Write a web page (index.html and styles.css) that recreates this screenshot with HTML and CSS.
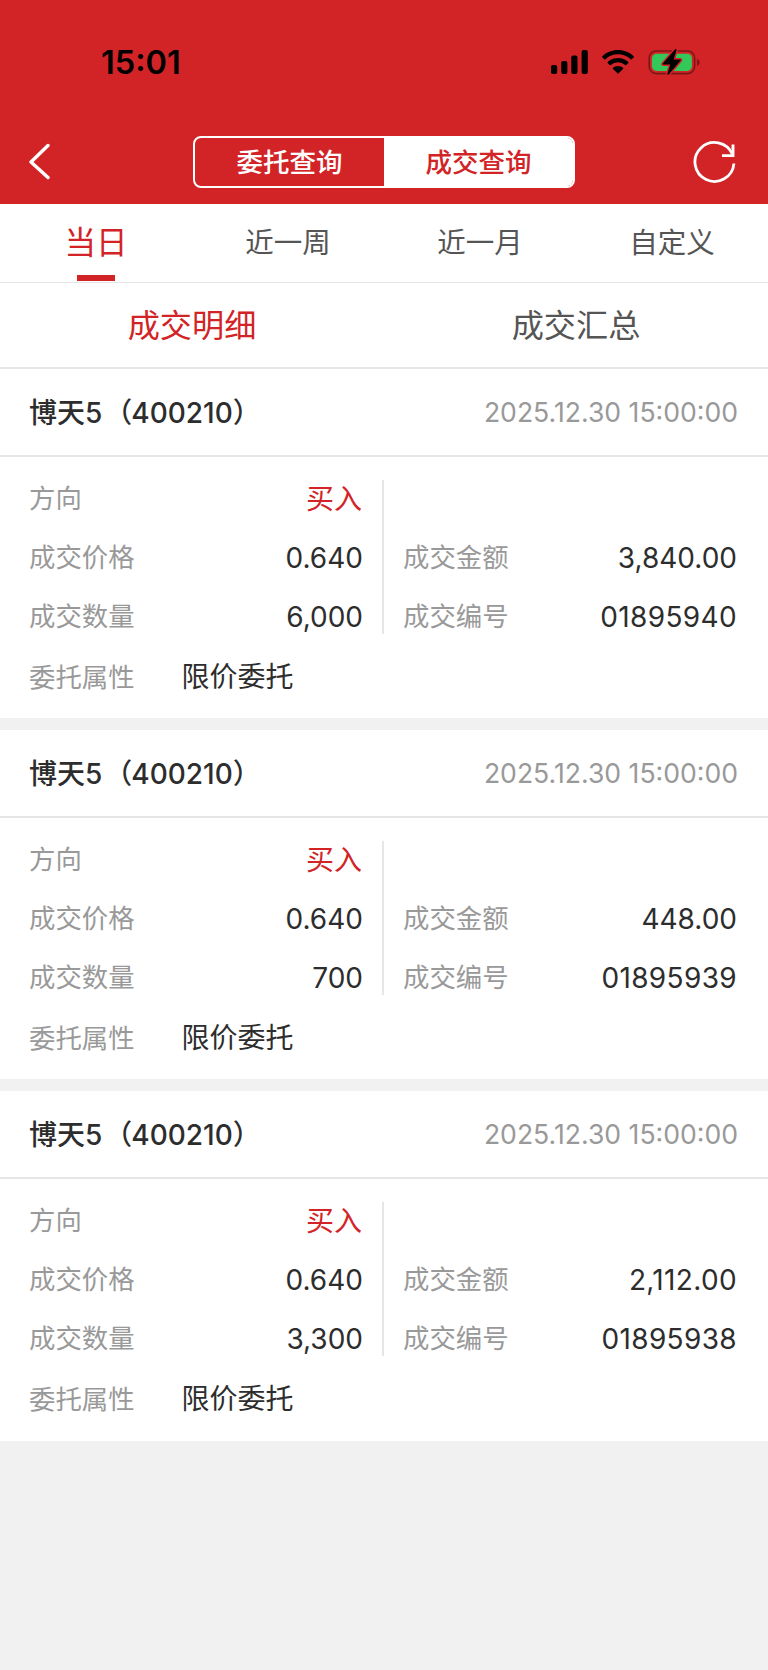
FILE: index.html
```html
<!DOCTYPE html>
<html lang="zh-CN">
<head>
  <meta charset="UTF-8">
  <meta name="viewport" content="width=device-width, initial-scale=1.0">
  <title>成交查询</title>
  <link rel="stylesheet" href="styles.css">
</head>
<body>

<header>
  <div class="status-bar">
    <span class="time">15:01</span>
    <div class="status-icons">
      <svg class="signal" width="37" height="24" viewBox="0 0 37 24">
        <rect x="0" y="15" width="6.2" height="9" rx="2"/>
        <rect x="10.2" y="11" width="6.2" height="13" rx="2"/>
        <rect x="20.3" y="5.6" width="6.2" height="18.4" rx="2"/>
        <rect x="30.6" y="0" width="6.2" height="24" rx="2"/>
      </svg>
      <svg class="wifi" width="32" height="24" viewBox="0 0 32 24">
        <path d="M16 0C22.100 0 27.600 2.300 31.600 6.200a.8.8 0 0 1 0 1.200L29.700 9.300a.8.8 0 0 1-1.100 0A18 18 0 0 0 3.400 9.300a.8.8 0 0 1-1.100 0L.4 7.400a.8.8 0 0 1 0-1.200C4.400 2.300 9.900 0 16 0Z"/>
        <path d="M16 7.900C20 7.900 23.600 9.400 26.300 11.900a.8.8 0 0 1 0 1.200L24.300 15a.8.8 0 0 1-1.100 0A10.600 10.600 0 0 0 8.800 15a.8.8 0 0 1-1.100 0L5.700 13.100a.8.8 0 0 1 0-1.200C8.400 9.400 12 7.900 16 7.900Z"/>
        <path d="M16 15.900C18 15.900 19.700 16.600 21 17.700a.8.8 0 0 1 0 1.200L16.600 23.300a.8.8 0 0 1-1.200 0L11 18.900a.8.8 0 0 1 0-1.200C12.300 16.600 14 15.900 16 15.900Z"/>
      </svg>
      <svg class="battery" width="53" height="28" viewBox="0 0 53 28">
        <rect x="1.200" y="3" width="45.400" height="22.600" rx="7" fill="none" stroke="#7d1517" stroke-width="1.600"/>
        <path d="M49 10.700c1.700.7 2.500 2 2.500 3.600s-.8 2.900-2.500 3.600z" fill="#7d1517"/>
        <rect x="3.900" y="5.700" width="40" height="17.200" rx="4.600" fill="#34c759"/>
        <path class="bolt" d="M27.200 1.300 14.800 15.600c-.4.500-.1 1 .5 1h7L19.400 25.800c-.3 1.200.6 1.500 1.300.7L32.600 12.500c.4-.5.200-1.100-.5-1.100H25.600L28.500 2.300c.3-1.100-.6-1.700-1.300-1z"/>
      </svg>
    </div>
  </div>
  <div class="nav-bar">
    <svg class="back" width="22" height="38" viewBox="0 0 22 38">
      <path d="M20 2.500 3 19 20 34.500" fill="none" stroke="#fff" stroke-width="3.400" stroke-linecap="round" stroke-linejoin="round"/>
    </svg>
    <div class="switch">
      <a class="switch-item">委托查询</a>
      <a class="switch-item active">成交查询</a>
    </div>
    <svg class="refresh" width="44" height="44" viewBox="0 0 44 44">
      <path d="M40.900 23.500A19.500 19.500 0 1 1 39.400 14.300" fill="none" stroke="#fff" stroke-width="2.800"/>
      <path d="M40 4.500V15.600H29" fill="none" stroke="#fff" stroke-width="2.900"/>
    </svg>
  </div>
</header>

<nav class="range-tabs">
  <a class="active">当日</a>
  <a>近一周</a>
  <a>近一月</a>
  <a>自定义</a>
</nav>

<nav class="view-tabs">
  <a class="active">成交明细</a>
  <a>成交汇总</a>
</nav>

<main>
  <section class="card">
    <div class="card-head">
      <h2>博天5<span class="paren">（</span>400210）</h2>
      <time>2025.12.30 15:00:00</time>
    </div>
    <div class="card-body">
      <div class="columns">
        <dl class="left">
          <div><dt>方向</dt><dd class="buy">买入</dd></div>
          <div><dt>成交价格</dt><dd>0.640</dd></div>
          <div><dt>成交数量</dt><dd>6,000</dd></div>
        </dl>
        <dl class="right">
          <div></div>
          <div><dt>成交金额</dt><dd>3,840.00</dd></div>
          <div><dt>成交编号</dt><dd class="code">01895940</dd></div>
        </dl>
      </div>
      <div class="attr"><span>委托属性</span><b>限价委托</b></div>
    </div>
  </section>

  <section class="card">
    <div class="card-head">
      <h2>博天5<span class="paren">（</span>400210）</h2>
      <time>2025.12.30 15:00:00</time>
    </div>
    <div class="card-body">
      <div class="columns">
        <dl class="left">
          <div><dt>方向</dt><dd class="buy">买入</dd></div>
          <div><dt>成交价格</dt><dd>0.640</dd></div>
          <div><dt>成交数量</dt><dd>700</dd></div>
        </dl>
        <dl class="right">
          <div></div>
          <div><dt>成交金额</dt><dd>448.00</dd></div>
          <div><dt>成交编号</dt><dd class="code">01895939</dd></div>
        </dl>
      </div>
      <div class="attr"><span>委托属性</span><b>限价委托</b></div>
    </div>
  </section>

  <section class="card">
    <div class="card-head">
      <h2>博天5<span class="paren">（</span>400210）</h2>
      <time>2025.12.30 15:00:00</time>
    </div>
    <div class="card-body">
      <div class="columns">
        <dl class="left">
          <div><dt>方向</dt><dd class="buy">买入</dd></div>
          <div><dt>成交价格</dt><dd>0.640</dd></div>
          <div><dt>成交数量</dt><dd>3,300</dd></div>
        </dl>
        <dl class="right">
          <div></div>
          <div><dt>成交金额</dt><dd class="code">2,112.00</dd></div>
          <div><dt>成交编号</dt><dd class="code">01895938</dd></div>
        </dl>
      </div>
      <div class="attr"><span>委托属性</span><b>限价委托</b></div>
    </div>
  </section>
</main>

</body>
</html>
```
FILE: styles.css
```css
/* General */
* {
  box-sizing: border-box;
}
body {
  margin: 0;
  min-height: 1670px;
  background: #f1f1f1;
  color: #2d2d2d;
  font-family: Inter, "Noto Sans CJK SC", sans-serif;
}
svg {
  display: block;
}

/* Header */
header {
  height: 204px;
  background: #d22427;
}
.status-bar {
  display: flex;
  justify-content: space-between;
  height: 116px;
  padding: 0 67px 0 101px;
}
.time {
  margin-top: 43px;
  color: #000;
  font-size: 32.5px;
  font-weight: 600;
  line-height: 40px;
}
.status-icons {
  display: flex;
  align-items: flex-start;
  padding-top: 50px;
}
.wifi {
  margin-left: 14px;
}
.battery {
  margin: -2px 0 0 14px;
}
.bolt {
  stroke: #d22427;
  stroke-width: 3px;
  paint-order: stroke;
}
.nav-bar {
  display: flex;
  justify-content: space-between;
  align-items: center;
  height: 91px;
  padding: 0 31px 0 28px;
}
.switch {
  display: flex;
  width: 382px;
  height: 52px;
  margin-left: 25px;
  border: 2px solid #fff;
  border-radius: 8px;
  overflow: hidden;
}
.switch-item {
  flex: 1;
  color: #fff;
  font-size: 26.5px;
  font-weight: 500;
  line-height: 49px;
  text-align: center;
}
.switch-item.active {
  background: #fff;
  color: #d22427;
}

/* Tabs */
.range-tabs,
.view-tabs {
  display: flex;
  background: #fff;
  color: #555;
}
.range-tabs {
  height: 79px;
  border-bottom: 1px solid #e6e6e6;
}
.range-tabs a {
  display: flex;
  flex: 1;
  flex-direction: column;
  align-items: center;
  font-size: 28.5px;
  line-height: 78px;
}
.range-tabs .active {
  color: #d22427;
  font-size: 31.5px;
}
.range-tabs .active::after {
  content: "";
  width: 38px;
  height: 6px;
  margin-top: -7px;
  background: #d22427;
}
.view-tabs {
  height: 86px;
  border-bottom: 2px solid #e6e6e6;
}
.view-tabs a {
  flex: 1;
  font-size: 32.2px;
  line-height: 86px;
  text-align: center;
}
.view-tabs .active {
  color: #d22427;
}

/* Deal cards */
.card {
  height: 349px;
  margin-bottom: 12px;
  background: #fff;
}
.card:last-child {
  height: 350px;
}
.card-head {
  display: flex;
  justify-content: space-between;
  align-items: center;
  height: 88px;
  padding: 0 30px 0 29px;
  border-bottom: 2px solid #e6e6e6;
}
.card-head h2 {
  margin: 0 0 2px;
  font-size: 28px;
  font-weight: 500;
}
.paren {
  margin: 0 -1px 0 2px;
}
.card-head time {
  color: #999;
  font-size: 26.6px;
}
.card-body {
  padding-top: 23px;
}
.columns {
  display: flex;
  height: 154px;
}
.columns dl {
  margin: 0;
}
.columns dl div {
  display: flex;
  justify-content: space-between;
  height: 59px;
  line-height: 36px;
}
.left {
  width: 384px;
  padding: 0 19px 0 29px;
  border-right: 2px solid #e6e6e6;
}
.right {
  flex: 1;
  padding: 0 31px 0 19px;
}
dt,
.attr span {
  color: #999;
  font-size: 26.4px;
}
dd {
  margin: 0;
  font-size: 28px;
  line-height: 38px;
}
.code {
  letter-spacing: 0.35px;
}
.buy {
  margin-right: 1px;
  color: #d22427;
}
.attr {
  display: flex;
  gap: 47px;
  padding: 25px 29px 0;
  line-height: 36px;
}
.attr b {
  font-size: 28px;
  font-weight: 400;
}
```
